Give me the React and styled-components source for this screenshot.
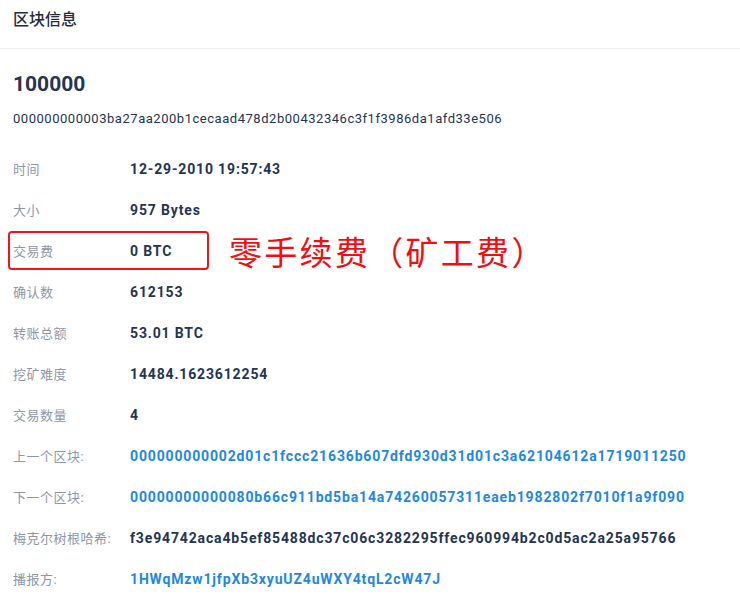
import React from 'react'
import styled, { createGlobalStyle } from 'styled-components'

const Global = createGlobalStyle`
  body {
    margin: 0;
    background: #fff;
    font-family: Roboto, "Noto Sans CJK SC", sans-serif;
  }
`

const Page = styled.div`
  width: 740px;
  height: 594px;
  overflow: hidden;
`

const Header = styled.div`
  height: 39px;
  padding: 9px 13px 0;
  border-bottom: 1px solid #eceef1;
  font-size: 16px;
  font-weight: 500;
  line-height: 22px;
  color: #1f2d3d;
`

const Body = styled.div`
  padding: 0 13px;
`

const Height = styled.div`
  margin-top: 22px;
  font-size: 21px;
  font-weight: 700;
  color: #243553;
  line-height: 26px;
`

const Hash = styled.div`
  margin-top: 13px;
  font-size: 13px;
  color: #243553;
  line-height: 18px;
  letter-spacing: 0.53px;
`

const List = styled.div`
  margin-top: 20px;
  display: flex;
  flex-direction: column;
`

const Row = styled.div`
  display: flex;
  align-items: center;
  height: 41px;
`

const Label = styled.div`
  width: 117px;
  flex-shrink: 0;
  font-size: 13px;
  letter-spacing: 0.5px;
  color: #8e97a8;
`

const Value = styled.div`
  font-size: 14px;
  font-weight: 700;
  letter-spacing: 0.85px;
  color: ${p => (p.$link ? '#1e88e5' : '#243553')};
  white-space: nowrap;
`

const Marked = styled.div`
  display: flex;
  align-items: center;
  margin-left: -5px;
  padding-left: 3px;
  width: 194px;
  height: 35px;
  border: 2px solid #f2141b;
  border-radius: 4px;
`

const Note = styled.div`
  margin-left: 20px;
  font-size: 33px;
  color: #f20d10;
  font-family: "Noto Sans CJK SC", sans-serif;
  letter-spacing: 2.3px;
`

const rows = [
  ['时间', '12-29-2010 19:57:43'],
  ['大小', '957 Bytes'],
  ['交易费', '0 BTC', false, true],
  ['确认数', '612153'],
  ['转账总额', '53.01 BTC'],
  ['挖矿难度', '14484.1623612254'],
  ['交易数量', '4'],
  ['上一个区块:', '000000000002d01c1fccc21636b607dfd930d31d01c3a62104612a1719011250', true],
  ['下一个区块:', '00000000000080b66c911bd5ba14a74260057311eaeb1982802f7010f1a9f090', true],
  ['梅克尔树根哈希:', 'f3e94742aca4b5ef85488dc37c06c3282295ffec960994b2c0d5ac2a25a95766'],
  ['播报方:', '1HWqMzw1jfpXb3xyuUZ4uWXY4tqL2cW47J', true],
]

export default function App() {
  return (
    <Page>
      <Global />
      <Header>区块信息</Header>
      <Body>
        <Height>100000</Height>
        <Hash>000000000003ba27aa200b1cecaad478d2b00432346c3f1f3986da1afd33e506</Hash>
        <List>
          {rows.map(([label, value, link, marked]) =>
            marked ? (
              <Row key={label}>
                <Marked>
                  <Label>{label}</Label>
                  <Value>{value}</Value>
                </Marked>
                <Note>零手续费（矿工费）</Note>
              </Row>
            ) : (
              <Row key={label}>
                <Label>{label}</Label>
                <Value $link={link}>{value}</Value>
              </Row>
            )
          )}
        </List>
      </Body>
    </Page>
  )
}
